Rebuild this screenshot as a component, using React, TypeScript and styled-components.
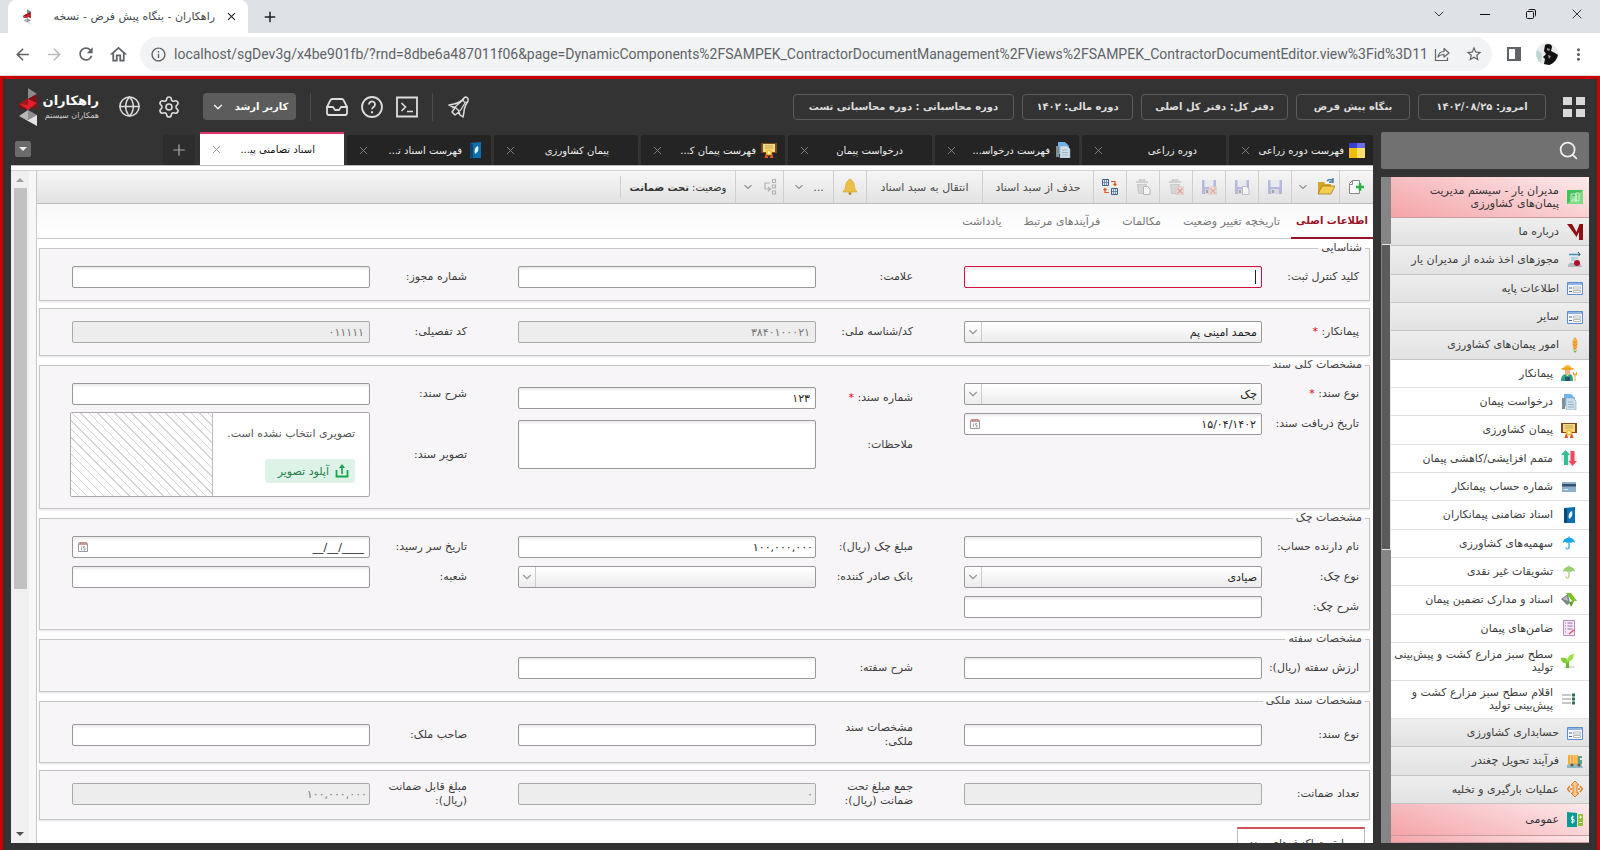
import React, { useId } from "react";
import styled, { createGlobalStyle, css } from "styled-components";
import {
  MdArrowBack,
  MdArrowForward,
  MdRefresh,
  MdOutlineHome,
  MdInfoOutline,
  MdStarBorder,
  MdMoreVert,
  MdClose,
  MdAdd,
} from "react-icons/md";
import { Globe, Settings, Inbox, Search, ChevronDown, X, Plus } from "lucide-react";

const GlobalStyle = createGlobalStyle`
  * { box-sizing: border-box; }
  body { margin: 0; font-family: "DejaVu Sans", sans-serif; font-size: 11px; color: #444; background: #333; }
  button, input, select, textarea { font: inherit; color: inherit; margin: 0; }
  button { border: 0; padding: 0; background: none; cursor: pointer; display: flex; align-items: center; justify-content: center; }
  a { color: inherit; text-decoration: none; }
  svg { display: block; flex: none; }
`;

/* ---------- window frame ---------- */

const Window = styled.div`
  height: 100vh;
  min-height: 600px;
  display: flex;
  flex-direction: column;
  overflow: hidden;
`;

const TitleBar = styled.header`
  height: 33px;
  flex: none;
  display: flex;
  align-items: stretch;
  padding-left: 8px;
  background: #dee1e6;
  color: #202124;
`;

const BrowserTab = styled.div`
  width: 240px;
  display: flex;
  align-items: center;
  padding: 0 10px 0 12px;
  border-radius: 8px 8px 0 0;
  background: #fff;
`;

const BrowserTabTitle = styled.span`
  flex: 1;
  margin: 0 10px 0 8px;
  direction: rtl;
  text-align: right;
  font-size: 11px;
  white-space: nowrap;
  color: #45494d;
`;

const NewTab = styled.button`
  width: 44px;
`;

const WindowButtons = styled.div`
  margin-left: auto;
  display: flex;
  height: 28px;
`;

const WindowButton = styled.button`
  width: 46px;
`;

const AddressBar = styled.div`
  height: 43px;
  flex: none;
  display: flex;
  align-items: center;
  padding: 0 8px 0 6px;
  background: #fff;
  border-bottom: 1px solid #dcdcdc;
  color: #5f6368;
`;

const NavButton = styled.button<{ $dim?: boolean; $w?: number }>`
  width: ${(p) => p.$w ?? 32}px;
  height: 32px;
  color: ${(p) => (p.$dim ? "#babcbe" : "#5f6368")};
`;

const Omnibox = styled.div`
  flex: 1;
  min-width: 0;
  height: 34px;
  display: flex;
  align-items: center;
  margin: 0 6px;
  padding: 0 2px 0 10px;
  border-radius: 17px;
  background: #f1f3f4;
`;

const UrlInput = styled.input`
  flex: 1;
  min-width: 0;
  border: 0;
  padding: 0;
  margin-left: 7px;
  outline: 0;
  background: none;
  font-family: Roboto, sans-serif;
  font-size: 14px;
  color: #5f6368;
`;

/* ---------- application shell ---------- */

const Shell = styled.div`
  flex: 1;
  min-height: 0;
  display: flex;
  flex-direction: column;
  direction: rtl;
  border: 3px solid #cc0000;
  border-bottom: 0;
  background: #333;
`;

const Header = styled.header`
  height: 53px;
  flex: none;
  display: flex;
  align-items: center;
  padding: 2px 12px 0 16px;
  color: #ddd;
`;

const AppGrid = styled.button`
  margin-left: 17px;
`;

const Chips = styled.div`
  display: flex;
  gap: 8px;
  margin-left: auto;
`;

const Chip = styled.button<{ $w: number }>`
  width: ${(p) => p.$w}px;
  height: 26px;
  border: 1px solid #5c5c5c;
  border-radius: 4px;
  font-weight: bold;
  font-size: 10px;
  white-space: nowrap;
  color: #ddd;
`;

const HeaderButton = styled.button<{ $w?: number }>`
  width: ${(p) => p.$w ?? 35}px;
  height: 32px;
`;

const HeaderDivider = styled.span`
  width: 1px;
  height: 28px;
  background: #4c4c4c;
  margin: 0 8px;
`;

const UserButton = styled.button`
  width: 93px;
  height: 27px;
  gap: 10px;
  border-radius: 4px;
  background: #5c5c5c;
  color: #fff;
  font-weight: bold;
  font-size: 10px;
  margin: 0 6px 0 14px;
`;

const Brand = styled.div`
  display: flex;
  align-items: center;
  gap: 7px;
  margin-right: 10px;
`;

const BrandText = styled.div`
  width: 55px;
  color: #fff;
  white-space: nowrap;
`;

const BrandName = styled.div`
  font-size: 13px;
  line-height: 18px;
  font-weight: bold;
`;

const BrandSub = styled.div`
  font-size: 8px;
  line-height: 12px;
  color: #ccc;
`;

const Body = styled.div`
  flex: 1;
  min-height: 0;
  display: flex;
  gap: 8px;
  padding: 0 8px 7px;
`;

/* ---------- side menu ---------- */

const Side = styled.aside`
  width: 208px;
  flex: none;
  display: flex;
  flex-direction: column;
  gap: 8px;
`;

const SearchBox = styled.label`
  height: 37px;
  flex: none;
  display: flex;
  align-items: center;
  padding: 0 10px;
  border-radius: 2px;
  background: #717171;
  color: #eee;
`;

const SearchInput = styled.input`
  flex: 1;
  min-width: 0;
  border: 0;
  outline: 0;
  background: none;
`;

const MenuFrame = styled.div`
  flex: 1;
  min-height: 0;
  display: flex;
`;

const MenuList = styled.nav`
  flex: 1;
  min-width: 0;
  display: flex;
  flex-direction: column;
  overflow: hidden;
  background: #fff;
`;

type Kind = "root" | "group" | "leaf";

const MenuItem = styled.a<{ $kind: Kind; $h: number }>`
  flex: ${(p) => (p.$h === 28 ? 1 : 0)} 0 ${(p) => p.$h}px;
  display: flex;
  align-items: center;
  gap: 8px;
  padding: 0 6px 0 0;
  line-height: 13px;
  color: #3c3c3c;
  border-bottom: 1px solid #c4c4c4;
  ${(p) =>
    p.$kind === "root" &&
    css`
      background: linear-gradient(20deg, #f4a4a8, #fbdcde 80%, #fce8ea);
      border-bottom-color: #c79a9d;
      color: #333;
    `}
  ${(p) =>
    p.$kind === "group" &&
    css`
      background: linear-gradient(#eee, #e2e2e2);
    `}
  ${(p) =>
    p.$kind === "leaf" &&
    css`
      padding-right: 12px;
      border-bottom-color: #e2e2e2;
      background: #fff;
    `}
`;

const MenuTrack = styled.div`
  width: 10px;
  flex: none;
  display: flex;
  flex-direction: column;
  padding: 0 0 0 1px;
  background: #858585;
`;

const MenuThumb = styled.div`
  margin-top: 67px;
  height: 46%;
  border: 1px solid #e6e6e6;
  border-left: 0;
  background: #5b5b5b;
`;

/* ---------- page tabs ---------- */

const Main = styled.main`
  flex: 1;
  min-width: 0;
  display: flex;
  flex-direction: column;
`;

const PageTabs = styled.div`
  height: 33px;
  flex: none;
  display: flex;
  align-items: flex-end;
  gap: 3px;
`;

const PageTab = styled.div<{ $active?: boolean }>`
  flex: 0 1 144px;
  min-width: 0;
  height: 30px;
  display: flex;
  align-items: center;
  padding: 0 8px 0 6px;
  border-radius: 3px 3px 0 0;
  background: #242424;
  color: #eee;
  ${(p) =>
    p.$active &&
    css`
      height: 33px;
      border-top: 2px solid #e0366f;
      border-radius: 0;
      background: #fff;
      color: #111;
    `}
`;

const TabIcon = styled.span`
  width: 16px;
  height: 16px;
  flex: none;
  margin-left: 5px;
`;

const PageTabTitle = styled.button`
  flex: 1;
  min-width: 0;
  height: 100%;
  justify-content: flex-start;
  font-size: 10px;
  white-space: nowrap;
`;

const TabClose = styled.button`
  width: 20px;
  height: 20px;
  color: #8c8c8c;
`;

const AddTab = styled.button`
  width: 32px;
  height: 30px;
  margin-right: 2px;
  background: #2d2d2d;
  color: #aaa;
`;

const TabList = styled.button`
  width: 16px;
  height: 16px;
  margin: 0 auto 8px 4px;
  border-radius: 2px;
  background: #6b6b6b;
`;

/* ---------- document panel ---------- */

const Panel = styled.section`
  flex: 1;
  min-height: 0;
  display: flex;
  padding-top: 4px;
  border-top: 1px solid #bbb;
  background: #fff;
`;

const Gutter = styled.div`
  width: 26px;
  flex: none;
  padding-right: 7px;
  display: flex;
  background: #f7f7f8;
  border-right: 1px solid #c8c8c8;
  border-top: 1px solid #d2d2d2;
`;

const Scrollbar = styled.div`
  flex: 1;
  display: flex;
  flex-direction: column;
  align-items: center;
  padding: 7px 0;
  background: #f0f0f0;
`;

const ScrollThumb = styled.div`
  width: 13px;
  height: 61%;
  margin: 6px 0 auto;
  background: #c1c1c1;
`;

const Document = styled.div`
  flex: 1;
  min-width: 0;
  display: flex;
  flex-direction: column;
  overflow: hidden;
`;

const Toolbar = styled.div`
  height: 34px;
  flex: none;
  display: flex;
  padding-right: 1px;
  border-top: 1px solid #d2d2d2;
  border-bottom: 1px solid #bdbdbd;
  background: linear-gradient(#f6f6f6, #e2e2e2);
`;

const Tool = styled.button<{ $w: number }>`
  width: ${(p) => p.$w}px;
  gap: 8px;
  border-left: 1px solid #cfcfcf;
  white-space: nowrap;
  color: #4c4c4c;
`;

const Status = styled.div`
  display: flex;
  align-items: center;
  justify-content: center;
  gap: 3px;
  width: 115px;
  margin: 5px 0;
  border-left: 1px solid #cfcfcf;
  white-space: nowrap;
  font-size: 10px;
  color: #333;
`;

const SectionTabs = styled.div`
  height: 35px;
  flex: none;
  display: flex;
  border-bottom: 1px solid #c8c8c8;
  background: linear-gradient(#f8f8f8, #fff);
`;

const SectionTab = styled.button<{ $active?: boolean }>`
  padding: 0 11px;
  white-space: nowrap;
  color: #777;
  ${(p) =>
    p.$active &&
    css`
      width: 82px;
      padding: 0;
      font-size: 10px;
      font-weight: bold;
      color: #98142a;
      border-bottom: 2px solid #98142a;
      margin-bottom: -1px;
    `}
`;

const Form = styled.form`
  padding: 0 3px 0 2px;
  display: flex;
  flex-direction: column;
`;

const Group = styled.fieldset<{ $titled?: boolean; $top?: number; $bottom?: number }>`
  flex: none;
  min-width: 0;
  display: grid;
  grid-template-columns: repeat(3, minmax(0, 1fr));
  column-gap: 51px;
  margin: ${(p) => (p.$titled ? 0 : 7)}px 0 0;
  padding: ${(p) => p.$top ?? (p.$titled ? 9 : 12)}px 10px ${(p) => p.$bottom ?? 12}px 32px;
  border: 1px solid #c6c6c8;
  background: #f7f5f7;
  box-shadow: 0 1px 2px #e4e4e4;
`;

const Legend = styled.legend`
  height: 18px;
  line-height: 18px;
  margin-right: -6px;
  padding: 0 3px;
  color: #444;
`;

const Column = styled.div<{ $gap?: number; $top?: number }>`
  display: flex;
  flex-direction: column;
  gap: ${(p) => p.$gap ?? 8}px;
  padding-top: ${(p) => p.$top ?? 0}px;
`;

const Row = styled.div<{ $h?: number }>`
  min-height: ${(p) => p.$h ?? 22}px;
  display: flex;
  align-items: center;
`;

const Label = styled.label`
  width: 97px;
  flex: none;
  line-height: 14px;
  color: #3c3c3c;
`;

const Required = styled.span`
  color: #e00022;
`;

const controlBox = css`
  width: 100%;
  border: 1px solid #999;
  border-radius: 2px;
  background: #fff;
  box-shadow: inset 0 2px 2px #ececec;
  outline: 0;
  color: #222;
`;

const Holder = styled.div`
  position: relative;
  flex: 1;
  min-width: 0;
`;

const TextBox = styled.input<{ $focus?: boolean; $tight?: boolean }>`
  ${controlBox}
  display: block;
  height: 22px;
  padding: 0 ${(p) => (p.$tight ? 2 : 5)}px;
  ${(p) =>
    p.$focus &&
    css`
      border-color: #d5103c;
    `}
  &:disabled {
    background: #ededed;
    border-color: #aaa;
    box-shadow: none;
    color: #777;
  }
`;

const Note = styled.textarea`
  ${controlBox}
  display: block;
  height: 49px;
  resize: none;
`;

const Drop = styled.select`
  ${controlBox}
  display: block;
  height: 22px;
  padding: 0 4px;
  appearance: none;
  box-shadow: none;
  background: linear-gradient(#fff, #ececec);
`;

const DropMark = styled.span`
  position: absolute;
  left: 1px;
  top: 1px;
  bottom: 1px;
  width: 17px;
  display: flex;
  align-items: center;
  justify-content: center;
  border-right: 1px solid #ccc;
  color: #999;
  pointer-events: none;
`;

const Caret = styled.span`
  position: absolute;
  right: 6px;
  top: 4px;
  width: 1px;
  height: 14px;
  background: #222;
`;

const DateButton = styled.button`
  position: absolute;
  left: 6px;
  top: 6px;
`;

const ImageBox = styled.div`
  flex: 1;
  min-width: 0;
  height: 85px;
  display: flex;
  border: 1px solid #aaa;
  border-radius: 2px;
  background: #fff;
  margin-left: -2px;
`;

const ImageInfo = styled.div`
  flex: 1;
  display: flex;
  flex-direction: column;
  align-items: flex-start;
  justify-content: space-between;
  padding: 14px 14px 13px 0;
  white-space: nowrap;
  color: #555;
`;

const ImagePreview = styled.div`
  width: 142px;
  border-right: 1px solid #bbb;
  background: repeating-linear-gradient(45deg, #fff 0 5px, #d4d4d4 5px 6px);
`;

const UploadButton = styled.button`
  width: 90px;
  height: 24px;
  justify-content: flex-start;
  gap: 6px;
  padding: 0 6px;
  border-radius: 3px;
  background: #def3e7;
  color: #23804c;
`;

const BottomTab = styled.button`
  width: 128px;
  height: 32px;
  flex: none;
  margin: 7px 5px 0 0;
  border: 1px solid #bbb;
  border-top: 2px solid #d05058;
  background: #fff;
  white-space: nowrap;
  color: #444;
`;

/* ---------- drawings ---------- */

const Svg = ({ s = 16, box = 16, children }: { s?: number; box?: number; children: React.ReactNode }) => (
  <svg width={s} height={s} viewBox={`0 0 ${box} ${box}`} fill="none" aria-hidden="true">
    {children}
  </svg>
);

const LogoMark = ({ w, h }: { w: number; h: number }) => (
  <svg width={w} height={h} viewBox="0 0 18 38" aria-hidden="true">
    <path d="M9 0L18 6 9 11z" fill="#8b8b8f" />
    <path d="M9 11L18 6V22L9 17z" fill="#7d1218" />
    <path d="M0 16L9 11 18 15 9 22z" fill="#e32029" />
    <path d="M0 16L9 11V17z" fill="#a3141c" />
    <path d="M0 16V20L9 22z" fill="#7a1015" />
    <path d="M0 28L9 22V32z" fill="#b8b8ba" />
    <path d="M9 22L18 27 9 32z" fill="#8f8f93" />
    <path d="M9 32L18 27V38L0 28z" fill="#e4e4e6" />
  </svg>
);

const HelpIcon = () => (
  <Svg s={24} box={24}>
    <circle cx="12" cy="12" r="10" stroke="#ddd" strokeWidth="1.8" />
    <path d="M9 9.5a3 3 0 1 1 4.6 2.5c-1 .7-1.6 1.1-1.6 2.3" stroke="#ddd" strokeWidth="1.8" />
    <path d="M12 16.2v2" stroke="#ddd" strokeWidth="2" />
  </Svg>
);

const TerminalIcon = () => (
  <Svg s={24} box={24}>
    <path d="M2 2.5h20v19H2z" stroke="#ddd" strokeWidth="1.8" />
    <path d="M6.5 8l4 4-4 4M12 16.5h6" stroke="#ddd" strokeWidth="1.6" />
  </Svg>
);

const AnnounceIcon = () => (
  <Svg s={24} box={24}>
    <path
      d="M2 10l5-1c5-1 8-3 10-6 2-2 5 0 4 3-2 3-4 6-4 11l-1 5-3-2-1-3-4 3-3-3 3-4z"
      stroke="#ddd"
      strokeWidth="1.5"
      strokeLinejoin="round"
    />
    <path d="M5 13l3-1 4 4-1 3M8 12l9-8M16 4c0 3 2 4 5 3M13 16l5-8" stroke="#ddd" strokeWidth="1.3" />
  </Svg>
);

const AppsIcon = () => (
  <Svg s={22} box={22}>
    <path d="M0 1h9v8H0zM13 1h9v8h-9zM0 13h9v8H0zM13 13h9v8h-9z" fill="#d8d8d8" />
  </Svg>
);

const TriangleIcon = ({ up, color }: { up?: boolean; color: string }) => (
  <svg width={8} height={4} viewBox="0 0 8 4" aria-hidden="true">
    <path d={up ? "M0 4l4-4 4 4z" : "M0 0h8L4 4z"} fill={color} />
  </svg>
);

const Pages = () => (
  <Svg>
    <path d="M3 0h7l4 4v8H3z" fill="#6fb4ea" />
    <path d="M5 4h7l3 3v9H5z" fill="#cfe0ea" stroke="#7fa8c2" strokeWidth=".6" />
    <path d="M1 4h3v11H1z" fill="#848c92" />
    <path d="M7 8h5M7 10.5h6M7 13h6" stroke="#9ab4c4" />
  </Svg>
);

const Certificate = () => (
  <Svg>
    <path d="M0 1h16v10H0z" fill="#7d4a1c" />
    <path d="M2 2h12v8H2z" fill="#f4d88a" />
    <path d="M4 4h8M4 6h8" stroke="#c9a24a" />
    <path d="M6 11l-1.5 5 2.5-1M10 11l1.5 5L9 15" stroke="#e0562b" strokeWidth="2" />
    <circle cx="8" cy="10.5" r="3" fill="#f7bd2e" />
    <circle cx="8" cy="10.5" r="1.5" fill="#fff1b8" />
  </Svg>
);

const Feather = () => (
  <Svg>
    <path d="M3 1l11-1v16H3z" fill="#0e6fae" />
    <path d="M3 1l3 1v14l-3-1z" fill="#0a4671" />
    <path d="M11 4c-3 1-4 4-3 8 3-2 4-4 3-8z" fill="#e6f6ff" />
  </Svg>
);

const Season = () => (
  <Svg>
    <path d="M0 1h8v5H0z" fill="#3a3fd0" />
    <path d="M8 1h8v5H8z" fill="#6a6ce8" />
    <path d="M0 6h8v10H0z" fill="#f0bd08" />
    <path d="M8 6h8v10H8z" fill="#ffe06c" />
  </Svg>
);

const Sheet = () => (
  <Svg>
    <path d="M0 1h16v14H0z" fill="#43c35d" />
    <path d="M0 15L16 1v14z" fill="#7ddc82" />
    <path d="M4 5h5v7H4zM9 4h3v8H9z" stroke="#d9f6dd" strokeWidth=".9" />
    <path d="M5 8h3M5 10h3" stroke="#d9f6dd" />
  </Svg>
);

const BrandM = () => (
  <Svg>
    <path d="M0 0h5l4.500 8L12.500 0H16v16h-4V8l-2.500 5L3 4z" fill="#8d0f14" />
  </Svg>
);

const License = () => (
  <Svg>
    <path d="M3 2h10v10H3z" fill="#e1e9ee" />
    <path d="M2 2.500h11" stroke="#3f8fb8" strokeWidth="1.500" />
    <path d="M11 0l2 2.500L11.500 4" stroke="#444" />
    <path d="M4 6h7M4 8h4" stroke="#93b6c8" />
    <path d="M1 13l2-2h10l2 4H1z" fill="#b3babd" />
    <circle cx="10" cy="11" r="3" fill="#b1122b" />
  </Svg>
);

const FormIcon = () => (
  <Svg>
    <path d="M.5 2.500h15v12H.5z" fill="#f3f7fd" stroke="#5f8ccd" />
    <path d="M1 3h14v2H1z" fill="#8fb4e6" />
    <path d="M2 8h3M2 11.500h3" stroke="#3f6dbb" />
    <path d="M6.500 7h7v2h-7zM6.500 10.500h7v2h-7z" stroke="#aaa" fill="#fff" strokeWidth=".8" />
  </Svg>
);

const Wheat = () => (
  <Svg>
    <path d="M8 0c3 2 3 9 1 13H7C5 9 5 2 8 0z" fill="#f4ae48" />
    <path d="M5.500 4L8 6l2.500-2M5.500 7L8 9l2.500-2M6 10l2 2 2-2" stroke="#d98520" strokeWidth=".7" />
    <path d="M5.500 12l2.500 4 2.500-3-2.500 1z" fill="#69b04a" />
  </Svg>
);

const Farmer = () => (
  <Svg>
    <path d="M3 3c0-4 7-4 7 0z" fill="#f8be3c" />
    <ellipse cx="6.500" cy="3.800" rx="6.500" ry="1.500" fill="#f0a31f" />
    <path d="M4 5h5v3c0 3-5 3-5 0z" fill="#f1b58a" />
    <path d="M0 16c0-5 2-6 4-7l2.500 2L9 9c2 1 3 2 3 7z" fill="#2fa37a" />
    <path d="M4 12h5v4H4z" fill="#29506f" />
    <path d="M14 8v8M12.500 7v3h3V7" stroke="#e7a62d" />
  </Svg>
);

const Arrows = () => (
  <Svg>
    <circle cx="8" cy="8" r="8" fill="#e9eef0" />
    <path d="M4.500 0L9 5H7v10H3V5H0z" fill="#35bf95" />
    <path d="M11.500 16L7.500 11H9.500V1h4v10H16z" fill="#ef4b5c" />
  </Svg>
);

const Card = () => (
  <Svg>
    <path d="M1 3h14v10H1z" fill="#8fb0cc" />
    <path d="M1 5h14v2.500H1z" fill="#33526e" />
    <path d="M3 10.500h4" stroke="#dfeaf2" />
  </Svg>
);

const Umbrella = ({ c }: { c: string }) => (
  <Svg>
    <path d="M2 8c0-7 12-7 12 0-1.500-1.500-2.500-1-4 0-1.500-1-2.500-1-4 0-1.500-1-2.500-1.500-4 0z" fill={c} />
    <path d="M8 1.500v11c0 2-3 2-3 0" stroke={c} strokeWidth="1.200" />
  </Svg>
);

const Guarantee = () => (
  <Svg>
    <path d="M0 7l7-5 2 9-3 2z" fill="#7d8380" />
    <path d="M2 7l4-3 1 5z" fill="#b9bfbc" />
    <path d="M5 1h5l6 8h-5z" fill="#78c52a" />
    <path d="M8 10l5-1-3 6z" fill="#5a9c22" />
  </Svg>
);

const Notebook = () => (
  <Svg>
    <path d="M2.500.5h11v15h-11z" fill="#f3e6f5" stroke="#b58bbb" />
    <path d="M4 3h1M4 6h1M4 9h1M4 12h1M6.500 3h5M6.500 6h5M6.500 9h5" stroke="#a172a8" />
    <path d="M8 14l5-4" stroke="#d9556b" strokeWidth="1.500" />
  </Svg>
);

const Sprout = () => (
  <Svg>
    <ellipse cx="8" cy="14" rx="6" ry="1.500" fill="#ddd" />
    <path d="M6.500 15V8" stroke="#6db52c" strokeWidth="3" />
    <path d="M7 10c-6 1-7-2-7-5 5-1 7 1 7 5z" fill="#86cc38" />
    <path d="M6 9c0-6 4-8 7-8-1 3 0 7-7 8z" fill="#a0dd49" />
  </Svg>
);

const Lines = () => (
  <Svg>
    <path d="M1 4h9M1 8h9M1 12h9" stroke="#b4b4b4" strokeWidth="1.600" />
    <path d="M11 2.500h3v3h-3zM11 6.500h3v3h-3zM11 10.500h3v3h-3z" fill="#2f6f52" />
  </Svg>
);

const Truck = () => (
  <Svg>
    <path d="M1 2h10v9H1z" fill="#f3ab3a" />
    <path d="M3.500 2v8M6.500 2v8M9 2v8" stroke="#fcd08a" />
    <path d="M11 3h4v2h-2v2h2v4h-4z" fill="#5da08c" />
    <path d="M0 12l2-1h12l2 4H0z" fill="#8fb8c0" />
    <circle cx="5" cy="12" r="1.500" fill="#6c5540" />
    <circle cx="12" cy="12" r="1.500" fill="#6c5540" />
  </Svg>
);

const Loading = () => (
  <Svg>
    <path d="M8 0l4 4h-2v8h2l-4 4-4-4h2V4H4z" fill="#ffc98b" stroke="#e07b22" />
    <path d="M3 5L.5 8 3 11M13 5l2.500 3-2.500 3M3 8h2M13 8h-2" stroke="#e07b22" strokeWidth="1.400" />
  </Svg>
);

const Finance = () => (
  <Svg>
    <path d="M0 1l10 1v14H0z" fill="#0c9b93" />
    <path d="M11 3h5v12h-5z" fill="#8ac32e" />
    <path d="M7 6H4.500v2.500H7V11H4M5.500 4.500v8" stroke="#e6fffd" />
    <path d="M12 6h3M13.500 4.500v3M12 11.500h3" stroke="#fff" />
  </Svg>
);

const NewDoc = () => (
  <Svg>
    <path d="M4.500 1.500h7v13h-10v-10zM1.500 5.500h3v-4" stroke="#888" fill="#fafafa" />
    <path d="M12 4v8M8 8h8" stroke="#27b23f" strokeWidth="2.400" />
  </Svg>
);

const FolderOpen = () => (
  <Svg s={18} box={18}>
    <path d="M1 4h6l1 2h6v10H1z" fill="#d9a520" />
    <path d="M1 16L5 8h13l-4 8z" fill="#f6cd51" stroke="#8f7124" strokeWidth=".7" />
    <path d="M10 3c2-2 4-2 6 0M16 0v4h-4" stroke="#4479a8" strokeWidth="1.400" />
  </Svg>
);

const RemoveMark = () => (
  <>
    <path d="M8 8h8v8H8z" fill="#f3cfc9" stroke="#d9988c" strokeWidth=".6" />
    <path d="M9.500 9.500l5 5M14.500 9.500l-5 5" stroke="#d06a5c" strokeWidth="1.200" />
  </>
);

const Disk = ({ extra }: { extra?: "page" | "remove" }) => (
  <Svg>
    <g opacity=".5">
      <path d="M1 1h14v14H1z" fill="#7f86cc" />
      <path d="M3.500 1h9v7h-9z" fill="#e6e8f4" />
      <path d="M4 10h8v5H4z" fill="#c4c6da" />
      <path d="M5 11h2v3H5z" fill="#666" />
      {extra === "page" && <path d="M8.500 7.500h4l2.500 2.500v5.500H8.500z" fill="#fff" stroke="#8d94a8" />}
      {extra === "remove" && <RemoveMark />}
    </g>
  </Svg>
);

const Trash = ({ extra }: { extra: "page" | "remove" }) => (
  <Svg>
    <g opacity=".55">
      <path d="M1 3h12M4.500 2.500V1h5v1.500" stroke="#aaa" strokeWidth="1.500" />
      <path d="M2 5h10l-1 10H3z" fill="#b3b3b3" />
      <path d="M5 6v8M7 6v8M9 6v8" stroke="#ddd" />
      {extra === "page" ? (
        <path d="M8.500 7.500h4l2.500 2.500v5.500H8.500z" fill="#fff" stroke="#8d8d8d" />
      ) : (
        <RemoveMark />
      )}
    </g>
  </Svg>
);

const Swap = () => (
  <Svg>
    <path d="M.5.5h6v6h-6zM9.500 9.500h6v6h-6z" fill="#dfe8f2" stroke="#40618c" />
    <path d="M2.500 1v5M4.500 1v5M1 3.500h5M11.500 10v5M13.500 10v5M10 12.500h5" stroke="#40618c" strokeWidth=".6" />
    <path d="M9 2.500h4v4M11.500 5L13 6.500 14.500 5M7 13.500H3v-4M1.500 11L3 9.500 4.500 11" stroke="#e35423" strokeWidth="1.200" />
  </Svg>
);

const BellIcon = () => (
  <Svg>
    <path
      d="M8 0c1.500 0 1.500 1.500 1.500 1.500C13 3 12 8 13 10l2 3H1l2-3c1-2 0-7 3.500-8.500C6.500 1.500 6.500 0 8 0z"
      fill="#edbf42"
      stroke="#d3a230"
      strokeWidth=".6"
    />
    <circle cx="8" cy="14.500" r="1.500" fill="#b98a21" />
  </Svg>
);

const Flow = () => (
  <Svg>
    <path
      d="M10.500.5h3v3h-3zM10.500 6h3v3h-3zM10.500 12h3v3h-3zM8 4H3v6h5M6 8l2.500 2L6 12.500"
      stroke="#b2b2b2"
      strokeWidth="1.200"
    />
  </Svg>
);

const CalendarIcon = () => (
  <Svg s={10} box={10}>
    <path d="M.5 1.500h9v8h-9z" fill="#fff" stroke="#999" />
    <path d="M1 0h8v3H1z" fill="#d99a98" />
    <path d="M2.500 0v2M5 0v2M7.500 0v2M3.500 4.500v3.500M7 4.500H5.500V6H7v2H5.500" stroke="#8a8a8a" strokeWidth=".8" />
  </Svg>
);

const UploadIcon = () => (
  <Svg s={14} box={14}>
    <path d="M1.500 6v6.500h11V6" stroke="#16a34e" strokeWidth="1.800" />
    <path d="M7 10V3" stroke="#16a34e" strokeWidth="1.600" />
    <path d="M4 4l3-4 3 4z" fill="#16a34e" />
  </Svg>
);

const ShareIcon = () => (
  <Svg>
    <path
      d="M1.500 3v11.500h12v-3M4 11c.5-4 3-5.500 6-5.500V2.500L15 7l-5 4V8.500c-3 0-4.500.5-6 2.500z"
      stroke="#5f6368"
      strokeWidth="1.200"
      strokeLinejoin="round"
    />
  </Svg>
);

const SidePanelIcon = () => (
  <Svg>
    <path d="M2 2h12v12H2z" stroke="#5f6368" strokeWidth="2" />
    <path d="M9 2h5v12H9z" fill="#5f6368" />
  </Svg>
);

const Avatar = () => (
  <Svg s={22} box={22}>
    <circle cx="11" cy="11" r="11" fill="#e9ecec" />
    <path d="M1 7a11 11 0 0 0 4 13l1-9z" fill="#bcd6d3" />
    <path d="M9 2c3-2 7-1 7 2l-1 4 4 2 3 2c-1 5-5 9-9 10l-5-1 1-5-2-2 3-3-2-3z" fill="#111" />
    <path d="M11 5l3 1-1 2-2-1zM12 12l3 1-2 3z" fill="#999" />
  </Svg>
);

const MinIcon = () => (
  <Svg s={10} box={10}>
    <path d="M0 5.500h10" stroke="#111" />
  </Svg>
);

const RestoreIcon = () => (
  <Svg s={10} box={10}>
    <rect x=".5" y="2.500" width="7" height="7" rx="1" stroke="#111" />
    <path d="M2.500 1a1.500 1.500 0 0 1 1-.5H8A1.500 1.500 0 0 1 9.500 2v4.500a1.500 1.500 0 0 1-.5 1" stroke="#111" />
  </Svg>
);

/* ---------- data ---------- */

const menu: { text: string; kind: Kind; icon: React.ReactNode; h?: number }[] = [
  { text: "مدیران یار - سیستم مدیریت پیمان‌های کشاورزی", kind: "root", icon: <Sheet />, h: 41 },
  { text: "درباره ما", kind: "group", icon: <BrandM /> },
  { text: "مجوزهای اخذ شده از مدیران یار", kind: "group", icon: <License /> },
  { text: "اطلاعات پایه", kind: "group", icon: <FormIcon /> },
  { text: "سایر", kind: "group", icon: <FormIcon /> },
  { text: "امور پیمان‌های کشاورزی", kind: "group", icon: <Wheat /> },
  { text: "پیمانکار", kind: "leaf", icon: <Farmer /> },
  { text: "درخواست پیمان", kind: "leaf", icon: <Pages /> },
  { text: "پیمان کشاورزی", kind: "leaf", icon: <Certificate /> },
  { text: "متمم افزایشی/کاهشی پیمان", kind: "leaf", icon: <Arrows /> },
  { text: "شماره حساب پیمانکار", kind: "leaf", icon: <Card /> },
  { text: "اسناد تضامنی پیمانکاران", kind: "leaf", icon: <Feather /> },
  { text: "سهمیه‌های کشاورزی", kind: "leaf", icon: <Umbrella c="#1ba7e8" /> },
  { text: "تشویقات غیر نقدی", kind: "leaf", icon: <Umbrella c="#9cce72" /> },
  { text: "اسناد و مدارک تضمین پیمان", kind: "leaf", icon: <Guarantee /> },
  { text: "ضامن‌های پیمان", kind: "leaf", icon: <Notebook /> },
  { text: "سطح سبز مزارع کشت و پیش‌بینی تولید", kind: "leaf", icon: <Sprout />, h: 38 },
  { text: "اقلام سطح سبز مزارع کشت و پیش‌بینی تولید", kind: "leaf", icon: <Lines />, h: 38 },
  { text: "حسابداری کشاورزی", kind: "group", icon: <FormIcon /> },
  { text: "فرآیند تحویل چغندر", kind: "group", icon: <Truck /> },
  { text: "عملیات بارگیری و تخلیه", kind: "group", icon: <Loading /> },
  { text: "عمومی", kind: "root", icon: <Finance />, h: 32 },
];

const pageTabs: { text: string; icon?: React.ReactNode; active?: boolean }[] = [
  { text: "فهرست دوره زراعی", icon: <Season /> },
  { text: "دوره زراعی" },
  { text: "فهرست درخواس\u200d...", icon: <Pages /> },
  { text: "درخواست پیمان" },
  { text: "فهرست پیمان ک\u200d...", icon: <Certificate /> },
  { text: "پیمان کشاورزی" },
  { text: "فهرست اسناد ت\u200d...", icon: <Feather /> },
  { text: "اسناد تضامنی پی\u200d...", active: true },
];

/* ---------- form fields ---------- */

type FieldProps = {
  label: string;
  value?: string;
  required?: boolean;
  disabled?: boolean;
  focus?: boolean;
  tight?: boolean;
  type?: "text" | "select" | "date" | "note";
  h?: number;
};

const Field = ({ label, value = "", required, disabled, focus, tight, type = "text", h }: FieldProps) => {
  const id = useId();
  return (
    <Row $h={h}>
      <Label htmlFor={id}>
        {label}:{required && <Required> *</Required>}
      </Label>
      <Holder>
        {type === "select" ? (
          <>
            <Drop id={id} defaultValue={value}>
              <option value={value}>{value}</option>
            </Drop>
            <DropMark>
              <ChevronDown size={14} strokeWidth={2} />
            </DropMark>
          </>
        ) : type === "note" ? (
          <Note id={id} defaultValue={value} />
        ) : (
          <TextBox id={id} defaultValue={value} disabled={disabled} $focus={focus} $tight={tight} />
        )}
        {type === "date" && (
          <DateButton type="button" aria-label="تقویم">
            <CalendarIcon />
          </DateButton>
        )}
        {focus && <Caret />}
      </Holder>
    </Row>
  );
};

const SideMenu = () => (
  <Side>
    <SearchBox>
      <Search size={21} strokeWidth={2} />
      <SearchInput aria-label="جستجو" />
    </SearchBox>
    <MenuFrame>
      <MenuList>
        {menu.map((m) => (
          <MenuItem key={m.text} href="#" $kind={m.kind} $h={m.h ?? 28}>
            {m.icon}
            <span>{m.text}</span>
          </MenuItem>
        ))}
        <MenuItem href="#" aria-label="ادامه" $kind="root" $h={7} />
      </MenuList>
      <MenuTrack>
        <MenuThumb />
      </MenuTrack>
    </MenuFrame>
  </Side>
);

const DocumentToolbar = () => (
  <Toolbar>
    <Tool $w={33} aria-label="جدید"><NewDoc /></Tool>
    <Tool $w={48} aria-label="باز کردن">
      <FolderOpen />
      <ChevronDown size={12} />
    </Tool>
    <Tool $w={33} aria-label="ذخیره"><Disk /></Tool>
    <Tool $w={33} aria-label="ذخیره و جدید"><Disk extra="page" /></Tool>
    <Tool $w={33} aria-label="ذخیره و بستن"><Disk extra="remove" /></Tool>
    <Tool $w={33} aria-label="حذف و بستن"><Trash extra="remove" /></Tool>
    <Tool $w={33} aria-label="حذف و جدید"><Trash extra="page" /></Tool>
    <Tool $w={33} aria-label="جابجایی"><Swap /></Tool>
    <Tool $w={111}>حذف از سبد اسناد</Tool>
    <Tool $w={116}>انتقال به سبد اسناد</Tool>
    <Tool $w={33} aria-label="یادآوری"><BellIcon /></Tool>
    <Tool $w={50}>
      ...
      <ChevronDown size={12} />
    </Tool>
    <Tool $w={48} aria-label="گردش کار">
      <Flow />
      <ChevronDown size={12} />
    </Tool>
    <Status>
      <span>وضعیت:</span>
      <b>تحت ضمانت</b>
    </Status>
  </Toolbar>
);

const DocumentForm = () => (
  <Form onSubmit={(e) => e.preventDefault()}>
    <Group $titled>
      <Legend>شناسایی</Legend>
      <Field label="کلید کنترل ثبت" focus />
      <Field label="علامت" />
      <Field label="شماره مجوز" />
    </Group>
    <Group>
      <Field label="پیمانکار" required type="select" value="محمد امینی پم" />
      <Field label="کد/شناسه ملی" disabled value="۳۸۴۰۱۰۰۰۲۱" />
      <Field label="کد تفصیلی" disabled value="۰۱۱۱۱۱" />
    </Group>
    <Group $titled $bottom={11}>
      <Legend>مشخصات کلی سند</Legend>
      <Column>
        <Field label="نوع سند" required type="select" value="چک" />
        <Field label="تاریخ دریافت سند" type="date" value="۱۵/۰۴/۱۴۰۲" />
      </Column>
      <Column $gap={11} $top={4}>
        <Field label="شماره سند" required value="۱۲۳" />
        <Field label="ملاحظات" type="note" />
      </Column>
      <Column $gap={7}>
        <Field label="شرح سند" />
        <Row>
          <Label as="span">تصویر سند:</Label>
          <ImageBox>
            <ImageInfo>
              <span>تصویری انتخاب نشده است.</span>
              <UploadButton type="button">
                <UploadIcon />
                آپلود تصویر
              </UploadButton>
            </ImageInfo>
            <ImagePreview />
          </ImageBox>
        </Row>
      </Column>
    </Group>
    <Group $titled $bottom={11}>
      <Legend>مشخصات چک</Legend>
      <Column>
        <Field label="نام دارنده حساب" />
        <Field label="نوع چک" type="select" value="صیادی" />
        <Field label="شرح چک" />
      </Column>
      <Column>
        <Field label="مبلغ چک (ریال)" value="۱۰۰,۰۰۰,۰۰۰" tight />
        <Field label="بانک صادر کننده" type="select" />
      </Column>
      <Column>
        <Field label="تاریخ سر رسید" type="date" value="____/__/__" />
        <Field label="شعبه" />
      </Column>
    </Group>
    <Group $titled>
      <Legend>مشخصات سفته</Legend>
      <Field label="ارزش سفته (ریال)" />
      <Field label="شرح سفته" />
    </Group>
    <Group $titled $bottom={11}>
      <Legend>مشخصات سند ملکی</Legend>
      <Field label="نوع سند" h={32} />
      <Field label="مشخصات سند ملکی" h={32} />
      <Field label="صاحب ملک" h={32} />
    </Group>
    <Group $top={9} $bottom={11}>
      <Field label="تعداد ضمانت" disabled />
      <Field label="جمع مبلغ تحت ضمانت (ریال)" disabled value="۰" tight />
      <Field label="مبلغ قابل ضمانت (ریال)" disabled value="۱۰۰,۰۰۰,۰۰۰" tight />
    </Group>
    <BottomTab type="button">سابقه تراکنش‌های سند</BottomTab>
  </Form>
);

export default function App() {
  return (
    <Window>
      <GlobalStyle />
      <TitleBar>
        <BrowserTab>
          <LogoMark w={14} h={16} />
          <BrowserTabTitle>راهکاران - بنگاه پیش فرض - نسخه</BrowserTabTitle>
          <button aria-label="Close tab"><MdClose size={13} /></button>
        </BrowserTab>
        <NewTab aria-label="New tab"><MdAdd size={18} /></NewTab>
        <WindowButtons>
          <WindowButton aria-label="Search tabs"><ChevronDown size={16} strokeWidth={1.3} /></WindowButton>
          <WindowButton aria-label="Minimize"><MinIcon /></WindowButton>
          <WindowButton aria-label="Restore"><RestoreIcon /></WindowButton>
          <WindowButton aria-label="Close"><X size={16} strokeWidth={1.3} /></WindowButton>
        </WindowButtons>
      </TitleBar>
      <AddressBar>
        <NavButton aria-label="Back"><MdArrowBack size={19} /></NavButton>
        <NavButton aria-label="Forward" $dim><MdArrowForward size={19} /></NavButton>
        <NavButton aria-label="Reload"><MdRefresh size={20} /></NavButton>
        <NavButton aria-label="Home"><MdOutlineHome size={21} /></NavButton>
        <Omnibox>
          <MdInfoOutline size={17} />
          <UrlInput
            aria-label="Address"
            dir="ltr"
            defaultValue="localhost/sgDev3g/x4be901fb/?rnd=8dbe6a487011f06&page=DynamicComponents%2FSAMPEK_ContractorDocumentManagement%2FViews%2FSAMPEK_ContractorDocumentEditor.view%3Fid%3D11"
          />
          <NavButton aria-label="Share"><ShareIcon /></NavButton>
          <NavButton aria-label="Bookmark"><MdStarBorder size={18} /></NavButton>
        </Omnibox>
        <NavButton aria-label="Side panel"><SidePanelIcon /></NavButton>
        <NavButton aria-label="Profile" $w={34}><Avatar /></NavButton>
        <NavButton aria-label="Menu" $w={28}><MdMoreVert size={19} /></NavButton>
      </AddressBar>
      <Shell>
        <Header>
          <AppGrid aria-label="برنامه‌ها"><AppsIcon /></AppGrid>
          <Chips>
            <Chip $w={128}>امروز: ۱۴۰۲/۰۸/۲۵</Chip>
            <Chip $w={114}>بنگاه پیش فرض</Chip>
            <Chip $w={147}>دفتر کل: دفتر کل اصلی</Chip>
            <Chip $w={111}>دوره مالی: ۱۴۰۲</Chip>
            <Chip $w={221}>دوره محاسباتی : دوره محاسباتی تست</Chip>
          </Chips>
          <HeaderButton aria-label="اعلان‌ها"><AnnounceIcon /></HeaderButton>
          <HeaderDivider />
          <HeaderButton aria-label="پایانه"><TerminalIcon /></HeaderButton>
          <HeaderButton aria-label="راهنما"><HelpIcon /></HeaderButton>
          <HeaderButton aria-label="صندوق"><Inbox size={24} strokeWidth={1.8} /></HeaderButton>
          <HeaderDivider />
          <UserButton>
            کاربر ارشد
            <ChevronDown size={14} />
          </UserButton>
          <HeaderButton $w={40} aria-label="تنظیمات"><Settings size={24} strokeWidth={1.6} /></HeaderButton>
          <HeaderButton $w={40} aria-label="زبان"><Globe size={23} strokeWidth={1.6} /></HeaderButton>
          <Brand>
            <BrandText>
              <BrandName>راهکاران</BrandName>
              <BrandSub>همکاران سیستم</BrandSub>
            </BrandText>
            <LogoMark w={18} h={38} />
          </Brand>
        </Header>
        <Body>
          <SideMenu />
          <Main>
            <PageTabs>
              {pageTabs.map((t) => (
                <PageTab key={t.text} $active={t.active}>
                  <TabIcon>{t.icon}</TabIcon>
                  <PageTabTitle>{t.text}</PageTabTitle>
                  <TabClose aria-label="بستن"><X size={13} strokeWidth={1.6} /></TabClose>
                </PageTab>
              ))}
              <AddTab aria-label="برگه جدید"><Plus size={18} strokeWidth={1.6} /></AddTab>
              <TabList aria-label="فهرست برگه‌ها"><TriangleIcon color="#eee" /></TabList>
            </PageTabs>
            <Panel>
              <Document>
                <DocumentToolbar />
                <SectionTabs>
                  <SectionTab $active>اطلاعات اصلی</SectionTab>
                  <SectionTab>تاریخچه تغییر وضعیت</SectionTab>
                  <SectionTab>مکالمات</SectionTab>
                  <SectionTab>فرآیندهای مرتبط</SectionTab>
                  <SectionTab>یادداشت</SectionTab>
                </SectionTabs>
                <DocumentForm />
              </Document>
              <Gutter>
                <Scrollbar>
                  <TriangleIcon up color="#a0a0a0" />
                  <ScrollThumb />
                  <TriangleIcon color="#505050" />
                </Scrollbar>
              </Gutter>
            </Panel>
          </Main>
        </Body>
      </Shell>
    </Window>
  );
}
